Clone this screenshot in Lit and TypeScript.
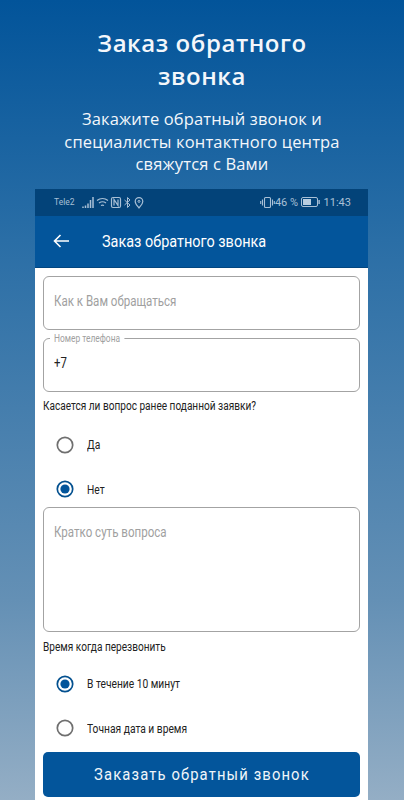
import { css, html, LitElement, svg } from 'lit'
import { customElement } from 'lit/decorators.js'

const radio = (on: boolean) => svg`
  <svg class="radio" width="18" height="18" viewBox="0 0 18 18">
    <circle cx="9" cy="9" r="7.7" fill="none" stroke="${on ? '#03508f' : '#6f6f6f'}" stroke-width="1.7"></circle>
    ${on ? svg`<circle cx="9" cy="9" r="4.6" fill="#03559b"></circle>` : ''}
  </svg>`

@customElement('app-root')
export class AppRoot extends LitElement {
  render() {
    return html`
      <div class="page">
        <h1>Заказ обратного<br />звонка</h1>
        <p class="lead">Закажите обратный звонок и<br />специалисты контактного центра<br />свяжутся с Вами</p>
        <div class="phone">
          <div class="status">
            <span class="carrier">Tele2</span>
            <svg class="st-left" width="63" height="13" viewBox="0 0 63 13" fill="none" stroke="#a9c0d6" stroke-width="1">
              <path d="M1 10.5v1.5M3.5 9.5v2.5M6 7.5v4.5M8.5 4v8M11 1v11" stroke-width="1.5"></path>
              <path d="M15 4.5a9 9 0 0 1 11 0M17 7a6 6 0 0 1 7 0M19 9.5a3 3 0 0 1 3 0" stroke-width="1.2"></path>
              <rect x="29.5" y="1.5" width="9" height="10" rx="1.5" stroke-width="1.2"></rect>
              <path d="M32 9.5v-6l4 6v-6" stroke-width="1.2"></path>
              <path d="M42.5 4l5.5 5-2.5 2.5v-10L48 4l-5.5 5"></path>
              <path d="M57 12c-2-2.6-3.8-4.4-3.8-6.6a3.8 3.8 0 0 1 7.6 0c0 2.2-1.8 4-3.8 6.6z" stroke-width="1.2"></path>
              <circle cx="57" cy="5.4" r="1"></circle>
            </svg>
            <span class="spacer"></span>
            <svg width="15" height="13" viewBox="0 0 15 13" fill="none" stroke="#a9c0d6" stroke-width="1.1">
              <rect x="4.5" y="1.5" width="6" height="10" rx="1"></rect>
              <path d="M2.5 3.5v6M0.7 5v3M12.5 3.5v6M14.3 5v3"></path>
            </svg>
            <span class="st-text pct">46 %</span>
            <svg class="batt" width="19" height="10" viewBox="0 0 19 10">
              <rect x="0.5" y="0.5" width="16" height="9" rx="1.5" fill="none" stroke="#a9c0d6"></rect>
              <rect x="2" y="2" width="8" height="6" fill="#b9cde0"></rect>
              <rect x="17.4" y="3" width="1.4" height="4" fill="#a9c0d6"></rect>
            </svg>
            <span class="st-text time">11:43</span>
          </div>
          <div class="bar">
            <svg width="16" height="14" viewBox="0 0 16 14" fill="none" stroke="#fff" stroke-width="1.6">
              <path d="M16 7H1.5M7.5 1L1.5 7l6 6"></path>
            </svg>
            <span class="bar-title">Заказ обратного звонка</span>
          </div>
          <div class="form">
            <div class="field"><span class="ph">Как к Вам обращаться</span></div>
            <div class="field phone-field">
              <span class="legend">Номер телефона</span>
              <span class="value">+7</span>
            </div>
            <div class="label first-label">Касается ли вопрос ранее поданной заявки?</div>
            <div class="opts yes-no">
              <div class="opt">${radio(false)}<span>Да</span></div>
              <div class="opt">${radio(true)}<span>Нет</span></div>
            </div>
            <div class="field area"><span class="ph">Кратко суть вопроса</span></div>
            <div class="label">Время когда перезвонить</div>
            <div class="opts when">
              <div class="opt">${radio(true)}<span>В течение 10 минут</span></div>
              <div class="opt">${radio(false)}<span>Точная дата и время</span></div>
            </div>
            <div class="submit"><span>Заказать обратный звонок</span></div>
          </div>
        </div>
      </div>
    `
  }

  static styles = css`
    :host {
      display: block;
    }

    .page {
      height: 800px;
      overflow: hidden;
      box-sizing: border-box;
      padding-top: 26px;
      background: linear-gradient(180deg, #02549a 0%, #2a6ea6 30%, #6490b5 75%, #94aec5 100%);
      font-family: 'Open Sans', sans-serif;
      color: #f4f7fb;
      text-align: center;
    }

    h1 {
      margin: 0;
      font-size: 24px;
      line-height: 33px;
      font-weight: 600;
      letter-spacing: 0.55px;
    }

    .lead {
      margin: 16px 0 0;
      font-size: 16.5px;
      line-height: 22.5px;
      font-weight: 500;
      letter-spacing: 0.15px;
    }

    .phone {
      margin: 13px 36px 0 35px;
      background: #fff;
      font-family: Roboto, sans-serif;
      text-align: left;
      height: 620px;
    }

    .status {
      height: 27px;
      background: #034379;
      display: flex;
      align-items: center;
      padding: 0 17px 0 19px;
      color: #a9c0d6;
    }

    .carrier {
      font-size: 8.5px;
      margin-right: 7px;
    }

    .spacer {
      flex: 1;
    }

    .st-text {
      font-size: 11px;
    }

    .pct {
      margin: 0 3px 0 0;
    }

    .time {
      margin-left: 3.5px;
    }

    .bar {
      height: 52px;
      background: #03559b;
      box-sizing: border-box;
      display: flex;
      align-items: center;
      padding-left: 18px;
      border-bottom: 1px solid #024680;
      color: #fff;
    }

    .bar-title {
      margin-left: 33px;
      font-size: 17px;
      display: inline-block;
      transform: scaleX(0.85);
      transform-origin: left center;
      white-space: nowrap;
    }

    .form {
      padding: 8px 8px 0;
    }

    .field {
      position: relative;
      box-sizing: border-box;
      height: 54px;
      border: 1px solid #a3a3a3;
      border-radius: 6px;
      padding: 14px 10px 0;
    }

    .ph,
    .value,
    .legend,
    .label,
    .opt span {
      display: inline-block;
      transform-origin: left center;
      white-space: nowrap;
    }

    .ph {
      font-size: 15px;
      line-height: 18px;
      color: #a0a0a0;
      transform: scaleX(0.77);
    }

    .value {
      font-size: 15px;
      line-height: 18px;
      color: #222;
      transform: scaleX(0.76);
    }

    .phone-field {
      margin-top: 8px;
    }

    .legend {
      position: absolute;
      left: 6px;
      top: -7px;
      padding: 0 5px;
      background: #fff;
      font-size: 10.5px;
      line-height: 13px;
      color: #a0a0a0;
      transform: scaleX(0.8);
    }

    .label {
      display: block;
      font-size: 12px;
      line-height: 16px;
      color: #222;
      transform: scaleX(0.84);
    }

    .first-label {
      margin-top: 6px;
    }

    .opts {
      display: flex;
      flex-direction: column;
      padding-left: 13px;
    }

    .opt {
      height: 44.5px;
      display: flex;
      align-items: center;
      gap: 13px;
      font-size: 12.5px;
      color: #222;
    }

    .opt span {
      transform: scaleX(0.82);
    }

    .radio {
      flex: none;
    }

    .yes-no {
      margin-top: 9px;
    }

    .area {
      height: 125px;
      margin-top: -5px;
      margin-bottom: 7px;
    }

    .when {
      margin-top: 7px;
    }

    .submit {
      margin-top: 1px;
      height: 45px;
      background: #03559b;
      border-radius: 5px;
      display: flex;
      align-items: center;
      justify-content: center;
      color: #f0f5fa;
      font-size: 17px;
      letter-spacing: 1.3px;
    }

    .submit span {
      display: inline-block;
      transform: scaleX(0.87);
      white-space: nowrap;
    }
  `
}
